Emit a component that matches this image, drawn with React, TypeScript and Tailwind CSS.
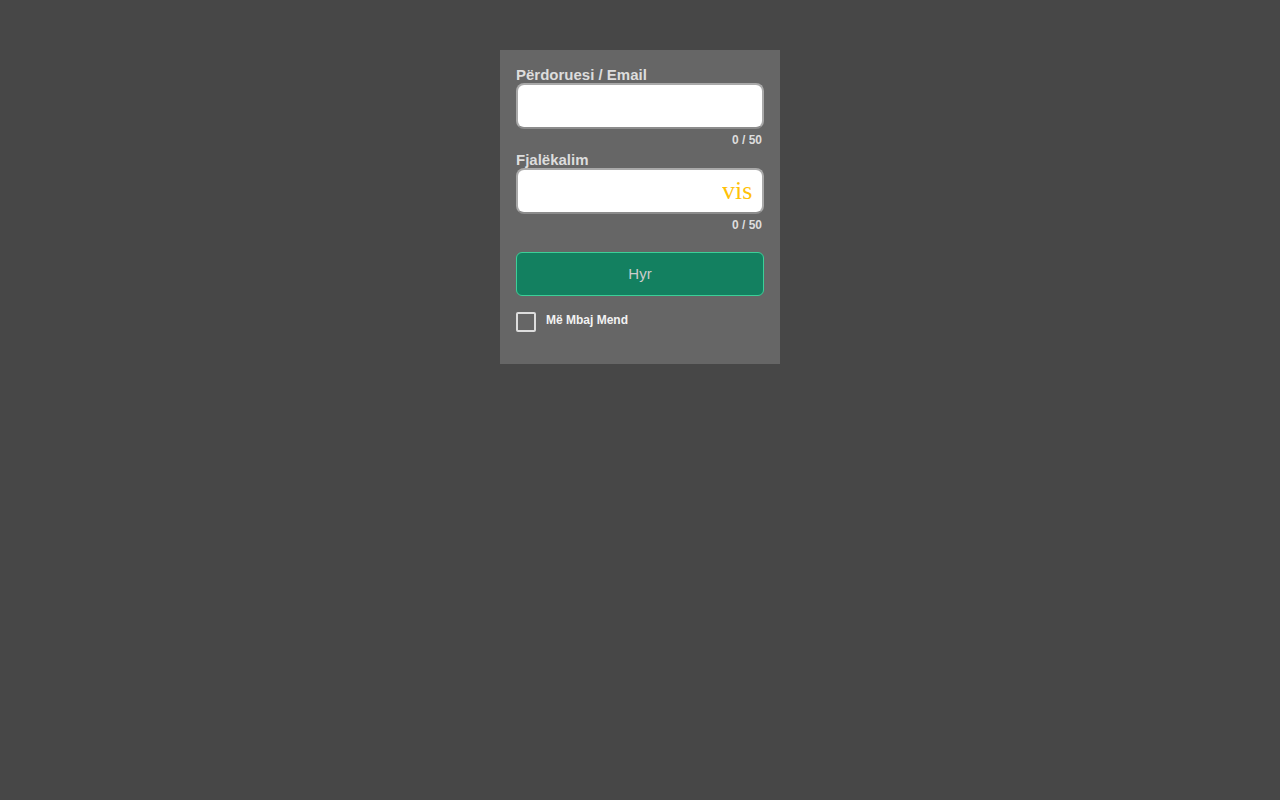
import React from "react";

const sans = { fontFamily: '"Liberation Sans", Arial, sans-serif' };

export default function App() {
  return (
    <div className="min-h-screen w-full bg-[#474747] pt-[50px]" style={sans}>
      <div className="mx-auto w-[280px] bg-[#666666] px-4 pt-[16px] pb-[32px]">
        {/* Username */}
        <label className="block text-[15px] font-bold leading-[17px] text-[#dddddd]">
          Përdoruesi / Email
        </label>
        <div className="h-[46px] w-full rounded-[8px] border-2 border-[#a9a9a9] border-b-[#8c8c8c] bg-white"></div>
        <div className="mt-[4px] pr-[2px] text-right text-[12px] font-bold leading-[14px] text-[#dddddd]">
          0 / 50
        </div>

        {/* Password */}
        <label className="mt-[4px] block text-[15px] font-bold leading-[17px] text-[#dddddd]">
          Fjalëkalim
        </label>
        <div className="relative h-[46px] w-full rounded-[8px] border-2 border-[#a9a9a9] border-b-[#8c8c8c] bg-white">
          <span
            className="absolute right-[10px] top-[7px] w-[30px] overflow-hidden whitespace-nowrap text-[26px] leading-[28px] text-[#ffc107]"
            style={{ fontFamily: '"Liberation Serif", "Times New Roman", serif' }}
          >
            visible
          </span>
        </div>
        <div className="mt-[4px] pr-[2px] text-right text-[12px] font-bold leading-[14px] text-[#dddddd]">
          0 / 50
        </div>

        {/* Submit */}
        <button className="mt-[20px] flex h-[44px] w-full items-center justify-center rounded-[6px] border border-[#3ccf98] bg-[#138060] text-[15px] text-[#cccccc]">
          Hyr
        </button>

        {/* Remember me */}
        <div className="mt-[16px] flex items-start gap-[10px]">
          <div className="h-[20px] w-[20px] rounded-[2px] border-2 border-[#dddddd]"></div>
          <span className="text-[12px] font-bold leading-[16px] text-[#f2f2f2]">Më Mbaj Mend</span>
        </div>
      </div>
    </div>
  );
}
